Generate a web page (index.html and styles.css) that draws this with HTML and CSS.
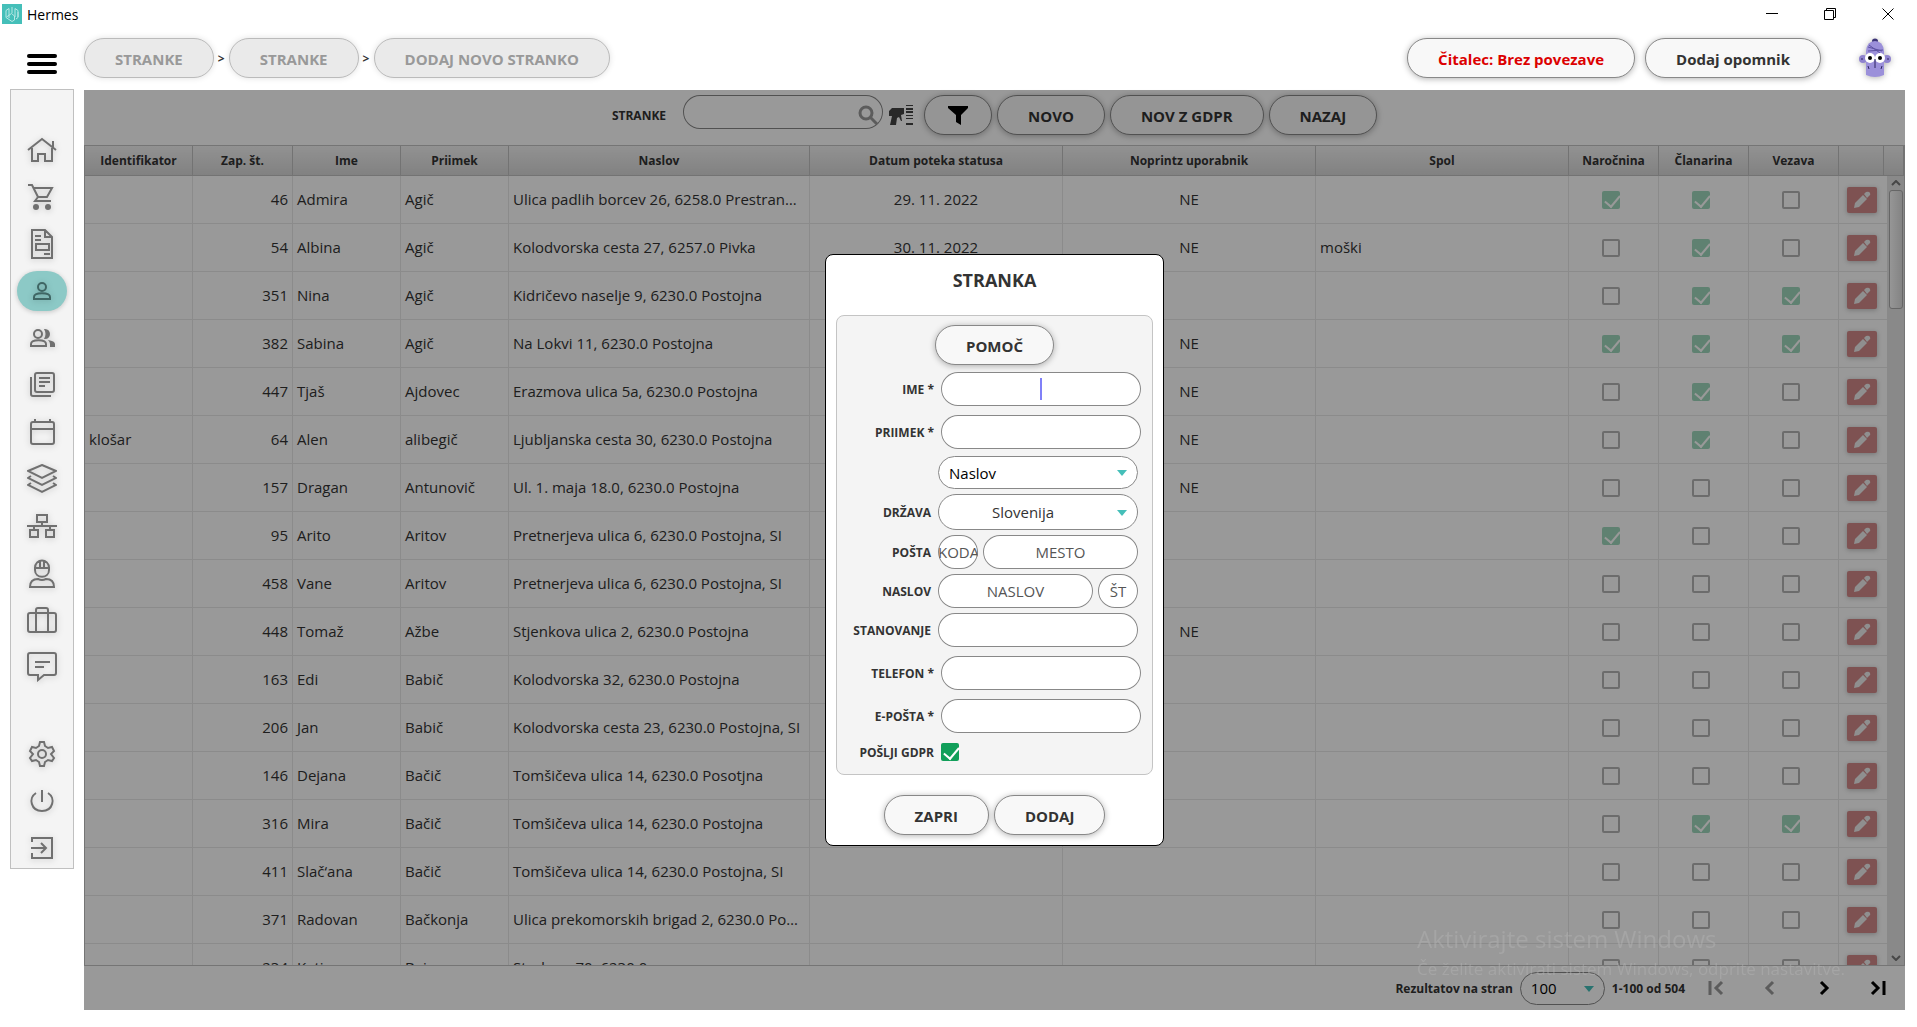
FILE: index.html
```
<!DOCTYPE html>
<html lang="sl">

<head>
    <meta charset="UTF-8">
    <meta name="viewport" content="width=device-width, initial-scale=1.0">
    <title>Hermes</title>
    <link rel="stylesheet" href="styles.css">
</head>

<body>
    <header class="titlebar">
        <svg class="logo" viewBox="0 0 20 20">
            <rect width="20" height="20" fill="#45bfb9" />
            <path d="M10 3v6M7 4.500L4 6.500v7l3 2M7 4.500V14M13 4.500l3 2v7l-2 1.500M4.500 13l5-3.500 3 2.500V16l-2.500 1.500L7 15.500M13 4.500V13M16 8v5" fill="none" stroke="#b9e8e5" />
        </svg>
        <span class="app-name">Hermes</span>
        <div class="window-buttons">
            <button aria-label="Minimiziraj"><svg viewBox="0 0 12 12"><path d="M0 5.500h12" /></svg></button>
            <button aria-label="Obnovi"><svg viewBox="0 0 12 12"><path d="M.5 2.500h9v9h-9zM2.500 2.500v-2h9v9h-2" /></svg></button>
            <button aria-label="Zapri okno"><svg viewBox="0 0 12 12"><path d="M.5.5l11 11M11.500.5l-11 11" /></svg></button>
        </div>
    </header>

    <div class="topbar">
        <button class="menu-btn" aria-label="Meni"><span></span><span></span><span></span></button>
        <nav class="breadcrumbs">
            <button class="pill" disabled>STRANKE</button>
            <span>&gt;</span>
            <button class="pill" disabled>STRANKE</button>
            <span>&gt;</span>
            <button class="pill" disabled>DODAJ NOVO STRANKO</button>
        </nav>
        <div class="top-actions">
            <button class="pill reader">Čitalec: Brez povezave</button>
            <button class="pill">Dodaj opomnik</button>
            <svg class="avatar" viewBox="0 0 32 40">
                <ellipse cx="16" cy="3" rx="3" ry="2.500" fill="#3d3577" />
                <circle cx="4" cy="21" r="4" fill="#8f83cf" />
                <circle cx="28" cy="21" r="4" fill="#8f83cf" />
                <path d="M7 37V13Q8 3 16 3t9 10v24q-9 4-18 0z" fill="#9b90da" />
                <path d="M9 9l14 4M10 7l11 8M9 13l15-1" stroke="#5d52a3" fill="none" />
                <circle cx="11" cy="20" r="5" fill="#fff" />
                <circle cx="21" cy="20" r="5" fill="#fff" />
                <circle cx="11" cy="20" r="2" />
                <circle cx="21" cy="20" r="2" />
                <path d="M16 21v7M15 29h2M9 28l1 3M23 28l-1 3M2 21h2M28 21h2" stroke="#2c2560" fill="none" />
            </svg>
        </div>
    </div>

    <div class="layout">
        <nav class="sidebar">
            <a href="#" aria-label="Domov"><svg viewBox="0 0 30 30"><path d="M1 15L15 4l14 11M26 13V6M5 13v13h6v-7h7v7h7V13" /></svg></a>
            <a href="#" aria-label="Košarica"><svg viewBox="0 0 30 30"><path d="M1 3h4l6 12-3 4h16M7 6h18l-5 9h-9" /><g class="fill"><circle cx="9" cy="25" r="3" /><circle cx="21" cy="25" r="3" /></g></svg></a>
            <a href="#" aria-label="Računi"><svg viewBox="0 0 30 30"><path d="M5 1h13l7 7v21H5zM18 1v7h7M8 7h6M8 11h6M9 15h13v6H9zM17 25h6" /></svg></a>
            <a href="#" class="active" aria-label="Stranke"><svg viewBox="0 0 30 30"><circle cx="15" cy="11" r="4" /><path d="M7 23v-2c0-5 16-5 16 0v2z" /></svg></a>
            <a href="#" aria-label="Skupine"><svg viewBox="0 0 30 30"><circle cx="11" cy="11" r="4" /><path d="M4 23v-2c0-5 15-5 15 0v2z" /><g class="fill"><path d="M17 6c8-1 8 11 0 10 2-3 2-7 0-10zM21 17q7 1 7 4v3h-5v-3q0-2-2-4z" /></g></svg></a>
            <a href="#" aria-label="Knjižnica"><svg viewBox="0 0 30 30"><rect x="8" y="3" width="19" height="19" rx="2" /><path d="M4 7v17q0 2 2 2h18M12 8h11M12 12h11M12 16h6" /></svg></a>
            <a href="#" aria-label="Koledar"><svg viewBox="0 0 30 30"><rect x="4" y="5" width="23" height="22" rx="2" /><path d="M4 12h23M8 2v3M23 2v3" /></svg></a>
            <a href="#" aria-label="Zaloga"><svg viewBox="0 0 30 30"><path d="M15 1l14 6-14 7L1 7zM4 12l-3 2 14 7 14-7-3-2M4 19l-3 2 14 7 14-7-3-2" /></svg></a>
            <a href="#" aria-label="Oddelki"><svg viewBox="0 0 30 30"><path d="M10 4h10v7H10zM3 19h8v7H3zM19 19h8v7h-8zM15 11v4M0 15h30M7 15v4M23 15v4" /></svg></a>
            <a href="#" aria-label="Zaposleni"><svg viewBox="0 0 30 30"><path d="M7 10h16M8 10v2c0 9 14 9 14 0v-2C22 0 8 0 8 10zM13 3v7M17 3v7M11 21c-6 0-8 4-8 8h24c0-4-2-8-8-8q-4 2-8 0z" /></svg></a>
            <a href="#" aria-label="Posli"><svg viewBox="0 0 30 30"><rect x="1" y="8" width="28" height="19" rx="2" /><path d="M9 27V5q0-2 2-2h8q2 0 2 2v22M9 8h12" /></svg></a>
            <a href="#" aria-label="Sporočila"><svg viewBox="0 0 30 30"><path d="M3 1h24q2 0 2 2v18q0 2-2 2H17l-6 5v-5H3q-2 0-2-2V3q0-2 2-2zM8 10h15M8 15h9" /></svg></a>
            <a href="#" class="settings" aria-label="Nastavitve"><svg viewBox="0 0 30 30"><path d="M13 3h4l1 4 3 2 4-1 2 4-3 3 3 4-2 3-4-1-3 2-1 4h-4l-1-4-3-2-4 1-2-3 3-4-3-3 2-4 4 1 3-2z" /><circle cx="15" cy="15" r="4" /></svg></a>
            <a href="#" aria-label="Izklop"><svg viewBox="0 0 30 30"><path d="M15 4v12M9 7C1 12 4 25 15 25S29 12 21 7" /></svg></a>
            <a href="#" aria-label="Odjava"><svg viewBox="0 0 30 30"><path d="M5 9V5h20v20H5v-5M4 15h15M14 10l5 5-5 5" /></svg></a>
        </nav>

        <main class="panel">
            <div class="toolbar">
                <label for="search">STRANKE</label>
                <div class="search">
                    <input type="text" id="search">
                    <svg viewBox="0 0 20 20"><circle cx="8" cy="8" r="6" /><path d="M12 12l7 7" /></svg>
                </div>
                <svg class="scanner" viewBox="0 0 24 20">
                    <path d="M0 6l3-3h12v6l-3 1 1 6h-1l-2-4-2 1-1 7H1l2-9H0zM17 0h7v1h-7zM17 3h7v2h-7zM17 6h7v2h-7zM17 10h7v1h-7zM17 13h7v1h-7zM17 18h7v2h-7z" />
                </svg>
                <button class="pill filter" aria-label="Filter"><svg viewBox="0 0 20 20"><path d="M0 1h20v2l-7 7v10l-5-3v-7L0 3z" /></svg></button>
                <button class="pill">NOVO</button>
                <button class="pill">NOV Z GDPR</button>
                <button class="pill">NAZAJ</button>
            </div>

            <div class="table-area">
                <table>
                    <colgroup>
                        <col class="c-id"><col class="c-no"><col class="c-name"><col class="c-name"><col class="c-address">
                        <col><col><col>
                        <col class="c-check"><col class="c-check"><col class="c-check"><col class="c-edit"><col class="c-scroll">
                    </colgroup>
                    <thead>
                        <tr>
                            <th>Identifikator</th><th>Zap. št.</th><th>Ime</th><th>Priimek</th><th>Naslov</th>
                            <th>Datum poteka statusa</th><th>Noprintz uporabnik</th><th>Spol</th>
                            <th>Naročnina</th><th>Članarina</th><th>Vezava</th><th></th><th></th>
                        </tr>
                    </thead>
                    <tbody id="rows"></tbody>
                </table>
                <div class="scrollbar">
                    <svg viewBox="0 0 10 6"><path d="M1 5l4-4 4 4" /></svg>
                    <div class="thumb"></div>
                    <svg class="down" viewBox="0 0 10 6"><path d="M1 1l4 4 4-4" /></svg>
                </div>
            </div>

            <footer class="pager">
                <label for="per-page">Rezultatov na stran</label>
                <div class="select per-page">
                    <select id="per-page"><option>100</option></select>
                </div>
                <span>1-100 od 504</span>
                <div class="pages">
                    <button disabled aria-label="Prva"><svg viewBox="0 0 16 16"><path d="M2 1v14M14 2L8 8l6 6" /></svg></button>
                    <button disabled aria-label="Prejšnja"><svg viewBox="0 0 16 16"><path d="M11 2L5 8l6 6" /></svg></button>
                    <button aria-label="Naslednja"><svg viewBox="0 0 16 16"><path d="M5 2l6 6-6 6" /></svg></button>
                    <button aria-label="Zadnja"><svg viewBox="0 0 16 16"><path d="M2 2l6 6-6 6M14 1v14" /></svg></button>
                </div>
            </footer>

            <div class="overlay">
                <form class="modal">
                    <h1>STRANKA</h1>
                    <div class="fields">
                        <button type="button" class="pill help">POMOČ</button>
                        <div class="row required">
                            <label for="ime">IME *</label>
                            <div class="caret-box"><input type="text" id="ime"><i class="caret"></i></div>
                        </div>
                        <div class="row required">
                            <label for="priimek">PRIIMEK *</label>
                            <input type="text" id="priimek">
                        </div>
                        <div class="address">
                            <div class="row">
                                <span></span>
                                <div class="select"><select aria-label="Vrsta naslova"><option>Naslov</option></select></div>
                            </div>
                            <div class="row">
                                <label for="drzava">DRŽAVA</label>
                                <div class="select country"><select id="drzava"><option>Slovenija</option></select></div>
                            </div>
                            <div class="row">
                                <label for="koda">POŠTA</label>
                                <div class="pair">
                                    <input type="text" class="short" id="koda" placeholder="KODA">
                                    <input type="text" placeholder="MESTO" aria-label="Mesto">
                                </div>
                            </div>
                            <div class="row">
                                <label for="naslov">NASLOV</label>
                                <div class="pair">
                                    <input type="text" id="naslov" placeholder="NASLOV">
                                    <input type="text" class="short" placeholder="ŠT" aria-label="Hišna številka">
                                </div>
                            </div>
                            <div class="row">
                                <label for="stanovanje">STANOVANJE</label>
                                <input type="text" id="stanovanje">
                            </div>
                        </div>
                        <div class="row required">
                            <label for="telefon">TELEFON *</label>
                            <input type="text" id="telefon">
                        </div>
                        <div class="row required">
                            <label for="eposta">E-POŠTA *</label>
                            <input type="text" id="eposta">
                        </div>
                        <div class="row required gdpr">
                            <label for="gdpr">POŠLJI GDPR</label>
                            <input type="checkbox" id="gdpr" checked>
                        </div>
                    </div>
                    <div class="modal-actions">
                        <button type="button" class="pill">ZAPRI</button>
                        <button type="button" class="pill">DODAJ</button>
                    </div>
                </form>
            </div>
        </main>
    </div>

    <div class="watermark">
        <p class="big">Aktivirajte sistem Windows</p>
        <p>Če želite aktivirati sistem Windows, odprite nastavitve.</p>
    </div>

    <script src="script.js"></script>
</body>

</html>
```

FILE: styles.css
```
* {
    margin: 0;
    padding: 0;
    box-sizing: border-box;
}

body {
    display: flex;
    flex-direction: column;
    height: 100vh;
    overflow: hidden;
    background-color: #fff;
    color: #333;
    font-family: "Open Sans", "Noto Sans", sans-serif;
    font-size: 15px;
}

button,
input,
select {
    font-family: inherit;
    font-size: inherit;
    color: inherit;
}

button {
    background: none;
    border: none;
}

svg {
    display: block;
}

/* title bar */
.titlebar {
    display: flex;
    align-items: center;
    height: 28px;
    padding-left: 2px;
    font-size: 14px;
    color: #000;
}

.logo {
    width: 20px;
    height: 20px;
    margin-right: 5px;
}

.window-buttons {
    display: flex;
    margin-left: auto;
}

.window-buttons button {
    width: 58px;
    padding: 0 23px;
}

.window-buttons svg {
    width: 12px;
    height: 12px;
    fill: none;
    stroke: #000;
}

/* top bar */
.topbar {
    display: flex;
    align-items: center;
    height: 60px;
    padding-right: 15px;
}

.menu-btn {
    display: flex;
    flex-direction: column;
    gap: 4px;
    width: 30px;
    margin: 12px 27px 0;
}

.menu-btn span {
    height: 4px;
    border-radius: 2px;
    background-color: #000;
}

.pill {
    height: 40px;
    padding: 2px 30px 0;
    border: 1px solid #888;
    border-radius: 20px;
    background-color: #f8f8f8;
    font-size: 15px;
    font-weight: bold;
    box-shadow: 0 1px 6px rgba(0, 0, 0, .3);
}

.pill:disabled {
    border-color: #bbb;
    background-color: #eaeaea;
    color: #999;
    box-shadow: 0 0 6px rgba(0, 0, 0, .12);
}

.breadcrumbs {
    display: flex;
    align-items: center;
    font-size: 12px;
    font-weight: bold;
}

.breadcrumbs span {
    width: 15px;
    text-align: center;
}

.top-actions {
    display: flex;
    align-items: center;
    gap: 10px;
    margin-left: auto;
}

.reader {
    color: #dc0000;
}

.avatar {
    width: 32px;
    height: 40px;
    margin: 0 11px 0 18px;
    filter: drop-shadow(0 1px 3px rgba(0, 0, 0, .3));
}

.top-actions .pill:nth-child(2) {
    margin-right: 10px;
}

/* layout */
.layout {
    display: flex;
    flex: 1;
    min-height: 0;
    gap: 10px;
    padding: 1px 12px 17px 10px;
}

.sidebar {
    display: flex;
    flex-direction: column;
    align-items: center;
    align-self: flex-start;
    flex: none;
    gap: 7px;
    width: 64px;
    padding-top: 40px;
    border: 1px solid #c0c0c0;
    background-color: #f4f4f4;
}

.sidebar a {
    display: flex;
    align-items: center;
    justify-content: center;
    width: 50px;
    height: 40px;
    border-radius: 20px;
}

.sidebar svg {
    width: 30px;
    height: 30px;
    fill: none;
    stroke: #707070;
    stroke-width: 2;
    filter: drop-shadow(0 1px 3px rgba(0, 0, 0, .2));
}

.sidebar .fill {
    fill: #707070;
    stroke: none;
}

.sidebar .active {
    background-color: #8cc9c6;
    box-shadow: 0 1px 5px rgba(0, 0, 0, .2);
}

.sidebar .active svg {
    stroke: #3f6664;
}

.sidebar .settings {
    margin-top: 40px;
}

.panel {
    position: relative;
    display: flex;
    flex-direction: column;
    flex: 1;
    min-width: 0;
    margin-top: 1px;
}

.toolbar {
    display: flex;
    align-items: flex-start;
    justify-content: center;
    gap: 5px;
    height: 55px;
    padding-top: 5px;
}

.toolbar label {
    margin-right: 12px;
    font-size: 12px;
    font-weight: bold;
    line-height: 42px;
}

.search {
    position: relative;
    width: 200px;
}

/* inset ring instead of a border, the narrow fields need the full width */
input[type="text"] {
    width: 100%;
    height: 34px;
    border: none;
    border-radius: 17px;
    background-color: #fff;
    box-shadow: inset 0 0 0 1px #888;
    text-align: center;
    outline: none;
}

input::placeholder {
    color: #555;
    opacity: 1;
}

.search svg {
    position: absolute;
    right: 5px;
    top: 10px;
    width: 20px;
    height: 20px;
    fill: none;
    stroke: #999;
    stroke-width: 3;
}

.scanner {
    width: 24px;
    height: 20px;
    margin: 10px 6px 0 1px;
    fill: #444;
}

.filter {
    padding: 0 23px;
}

.filter svg {
    width: 20px;
    height: 20px;
}

/* table */
.table-area {
    position: relative;
    flex: 1;
    min-height: 0;
    overflow: hidden;
    border: 1px solid #c4c4c4;
}

table {
    width: 100%;
    table-layout: fixed;
    border-collapse: separate;
    border-spacing: 0;
}

.c-id {
    width: 108px;
}

.c-no {
    width: 100px;
}

.c-name {
    width: 108px;
}

.c-address {
    width: 301px;
}

.c-check {
    width: 90px;
}

.c-edit {
    width: 45px;
}

.c-scroll {
    width: 20px;
}

th {
    height: 30px;
    border-right: 1px solid #c0c0c0;
    border-bottom: 1px solid #c0c0c0;
    background: linear-gradient(#f3f3f3, #d8d8d8);
    font-size: 12px;
}

td {
    height: 48px;
    padding: 0 4px 2px;
    border-right: 1px solid #e8e8e8;
    border-bottom: 1px solid #e8e8e8;
    overflow: hidden;
    text-overflow: ellipsis;
    white-space: nowrap;
}

td:nth-child(2) {
    text-align: right;
}

td:nth-child(5) {
    padding-right: 7px;
}

td:nth-child(6),
td:nth-child(7) {
    text-align: center;
}

td:nth-child(n+9) {
    padding: 0 6px 0 0;
}

td:nth-child(12) {
    padding: 0 6px 0 8px;
    border-right: none;
}

input[type="checkbox"] {
    appearance: none;
    display: block;
    width: 18px;
    height: 18px;
    border: 2px solid #444;
    border-radius: 2px;
}

input[type="checkbox"]:checked {
    border: none;
    background-color: #119f5a;
}

input[type="checkbox"]:checked::before {
    content: "";
    display: block;
    width: 7px;
    height: 13px;
    margin: 1px 0 0 6px;
    border: solid #fff;
    border-width: 0 2px 2px 0;
    transform: rotate(40deg);
}

td input[type="checkbox"] {
    margin: 0 auto;
    opacity: .4;
}

.edit {
    display: block;
    width: 30px;
    height: 26px;
    padding: 3px 5px;
    border-radius: 2px;
    background-color: #d28989;
    box-shadow: 0 1px 5px rgba(0, 0, 0, .25);
}

.edit svg {
    width: 20px;
    height: 20px;
    fill: #eee;
}

.scrollbar {
    position: absolute;
    top: 30px;
    right: 0;
    bottom: 0;
    display: flex;
    flex-direction: column;
    align-items: center;
    width: 17px;
    padding: 4px 0;
    background-color: #e4e4e4;
}

.scrollbar svg {
    width: 10px;
    height: 6px;
    fill: none;
    stroke: #777;
    stroke-width: 2;
}

.scrollbar .down {
    margin-top: auto;
}

.thumb {
    width: 14px;
    height: 119px;
    margin-top: 4px;
    border: 1px solid #aaa;
    border-radius: 3px;
    background: linear-gradient(to right, #fafafa, #dcdcdc);
}

/* pager */
.pager {
    display: flex;
    align-items: center;
    justify-content: flex-end;
    gap: 7px;
    height: 44px;
    padding-right: 19px;
    font-size: 12px;
    font-weight: bold;
}

.pages {
    display: flex;
    gap: 38px;
    margin-left: 16px;
}

.pages svg {
    width: 16px;
    height: 16px;
    fill: none;
    stroke: #000;
    stroke-width: 3;
}

.pages button:disabled svg {
    stroke: #999;
}

.select {
    position: relative;
    width: 100%;
}

.select::after {
    content: "";
    position: absolute;
    right: 11px;
    top: 14px;
    border: 5px solid transparent;
    border-top: 6px solid #45bfb9;
    border-bottom: none;
    pointer-events: none;
}

.select select {
    appearance: none;
    display: block;
    width: 100%;
    height: 33px;
    padding: 0 30px 0 10px;
    border: 1px solid #888;
    border-radius: 17px;
    background-color: #fff;
    color: #000;
    font-size: 15px;
    outline: none;
}

.per-page {
    width: 85px;
}

.country select {
    height: 36px;
    padding-left: 0;
    border-radius: 18px;
    color: #333;
    text-align: center;
    text-align-last: center;
}

.country::after {
    top: 16px;
}

/* modal */
.overlay {
    position: absolute;
    inset: 0;
    display: flex;
    align-items: center;
    justify-content: center;
    background-color: rgba(0, 0, 0, .4);
}

.modal {
    width: 339px;
    padding: 0 10px 10px;
    border: 1px solid #000;
    border-radius: 8px;
    background-color: #fff;
}

.modal h1 {
    height: 60px;
    font-size: 18px;
    line-height: 50px;
    text-align: center;
}

.fields {
    display: flex;
    flex-direction: column;
    gap: 5px;
    padding: 9px 11px;
    border: 1px solid #c4c4c4;
    border-radius: 8px;
    background-color: #f4f4f4;
}

.help {
    align-self: center;
}

.row {
    display: grid;
    grid-template-columns: 1fr 200px;
    align-items: center;
    gap: 7px;
    padding-right: 3px;
}

.row.required {
    padding: 2px 0;
}

.row label {
    font-size: 12px;
    font-weight: bold;
    text-align: right;
}

.row input,
.caret-box {
    display: block;
}

.address {
    display: flex;
    flex-direction: column;
    gap: 5px;
    padding-bottom: 2px;
}

.pair {
    display: flex;
    gap: 5px;
}

.pair input {
    min-width: 0;
}

.pair .short {
    flex: 0 0 40px;
}

.caret-box {
    position: relative;
}

.caret {
    position: absolute;
    left: 99px;
    top: 6px;
    width: 2px;
    height: 22px;
    background-color: #8080f8;
}

.row.gdpr {
    padding: 3px 0 4px;
}

.modal-actions {
    display: flex;
    justify-content: center;
    gap: 5px;
    padding-top: 20px;
}

/* system notice in the corner */
.watermark {
    position: fixed;
    right: 72px;
    bottom: 46px;
    color: rgba(180, 180, 180, .45);
    font-size: 17px;
    line-height: 24px;
    pointer-events: none;
}

.watermark .big {
    font-size: 24px;
    line-height: 36px;
}
```

FILE: script.js
```
(function () {
    // id, zap. št., ime, priimek, naslov, datum, noprintz, spol, naročnina/članarina/vezava
    const data = [
        ["", 46, "Admira", "Agič", "Ulica padlih borcev 26, 6258.0 Prestranek, SI", "29. 11. 2022", "NE", "", "110"],
        ["", 54, "Albina", "Agič", "Kolodvorska cesta 27, 6257.0 Pivka", "30. 11. 2022", "NE", "moški", "010"],
        ["", 351, "Nina", "Agič", "Kidričevo naselje 9, 6230.0 Postojna", "", "", "", "011"],
        ["", 382, "Sabina", "Agič", "Na Lokvi 11, 6230.0 Postojna", "", "NE", "", "111"],
        ["", 447, "Tjaš", "Ajdovec", "Erazmova ulica 5a, 6230.0 Postojna", "", "NE", "", "010"],
        ["klošar", 64, "Alen", "alibegič", "Ljubljanska cesta 30, 6230.0 Postojna", "", "NE", "", "010"],
        ["", 157, "Dragan", "Antunovič", "Ul. 1. maja 18.0, 6230.0 Postojna", "", "NE", "", "000"],
        ["", 95, "Arito", "Aritov", "Pretnerjeva ulica 6, 6230.0 Postojna, SI", "", "", "", "100"],
        ["", 458, "Vane", "Aritov", "Pretnerjeva ulica 6, 6230.0 Postojna, SI", "", "", "", "000"],
        ["", 448, "Tomaž", "Ažbe", "Stjenkova ulica 2, 6230.0 Postojna", "", "NE", "", "000"],
        ["", 163, "Edi", "Babič", "Kolodvorska 32, 6230.0 Postojna", "", "", "", "000"],
        ["", 206, "Jan", "Babič", "Kolodvorska cesta 23, 6230.0 Postojna, SI", "", "", "", "000"],
        ["", 146, "Dejana", "Bačič", "Tomšičeva ulica 14, 6230.0 Posotjna", "", "", "", "000"],
        ["", 316, "Mira", "Bačič", "Tomšičeva ulica 14, 6230.0 Postojna", "", "", "", "011"],
        ["", 411, "Slač‘ana", "Bačič", "Tomšičeva ulica 14, 6230.0 Postojna, SI", "", "", "", "000"],
        ["", 371, "Radovan", "Bačkonja", "Ulica prekomorskih brigad 2, 6230.0 Postojna", "", "", "", "000"],
        ["", 234, "Katja", "Baja", "Studeno 70, 6230.0", "", "", "", "000"]
    ]
    const pencil = '<svg viewBox="0 0 20 20"><path d="M2 18l1-5 8-8 4 4-8 8zM12 4l2-2q3-1 4 1 1 2-1 3l-2 2z" /></svg>'
    const names = ["Naročnina", "Članarina", "Vezava"]
    document.querySelector("#rows").innerHTML = data.map(row => {
        const cells = row.slice(0, 8).map(text => `<td>${text}</td>`).join("")
        const checks = [...row[8]].map((on, i) =>
            `<td><input type="checkbox" aria-label="${names[i]}" ${on === "1" ? "checked" : ""}></td>`).join("")
        return `<tr>${cells}${checks}<td><button class="edit" aria-label="Uredi">${pencil}</button></td><td></td></tr>`
    }).join("")
})()
```
